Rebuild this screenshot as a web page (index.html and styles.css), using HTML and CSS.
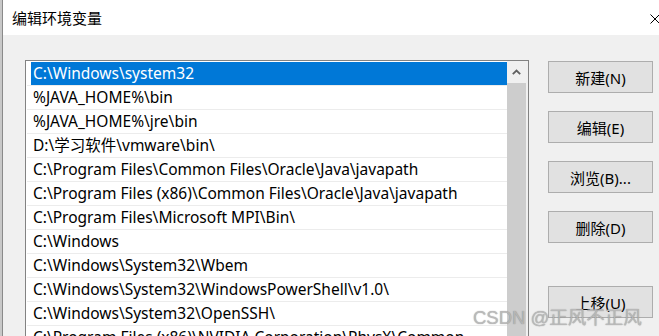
FILE: index.html
```html
<!DOCTYPE html>
<html>
<head>
    <meta charset="utf-8">
    <title>编辑环境变量</title>
    <link rel="stylesheet" href="styles.css">
</head>
<body>
    <div class="window">
        <!-- title bar -->
        <div class="titlebar">
            <span class="title">编辑环境变量</span>
            <svg class="close" width="10" height="10" viewBox="0 0 10 10">
                <path d="M0.5 0.5 L9.5 9.5 M9.5 0.5 L0.5 9.5" stroke="#000" stroke-width="1" fill="none"/>
            </svg>
        </div>

        <div class="content">
            <div class="listbox">
                <div class="items">
                    <div class="row selected"><span>C:\Windows\system32</span></div>
                    <div class="row"><span>%JAVA_HOME%\bin</span></div>
                    <div class="row"><span>%JAVA_HOME%\jre\bin</span></div>
                    <div class="row"><span>D:\学习软件\vmware\bin\</span></div>
                    <div class="row"><span>C:\Program Files\Common Files\Oracle\Java\javapath</span></div>
                    <div class="row"><span>C:\Program Files (x86)\Common Files\Oracle\Java\javapath</span></div>
                    <div class="row"><span>C:\Program Files\Microsoft MPI\Bin\</span></div>
                    <div class="row"><span>C:\Windows</span></div>
                    <div class="row"><span>C:\Windows\System32\Wbem</span></div>
                    <div class="row"><span>C:\Windows\System32\WindowsPowerShell\v1.0\</span></div>
                    <div class="row"><span>C:\Windows\System32\OpenSSH\</span></div>
                    <div class="row"><span>C:\Program Files (x86)\NVIDIA Corporation\PhysX\Common</span></div>
                </div>
                <div class="scrollbar">
                    <div class="arrow">
                        <svg width="9" height="6" viewBox="0 0 9 6">
                            <polyline points="0.8,5.2 4.5,1.5 8.2,5.2" stroke="#606060" stroke-width="1.8" fill="none"/>
                        </svg>
                    </div>
                    <div class="thumb"></div>
                </div>
            </div>

            <div class="buttons">
                <button>新建(N)</button>
                <button>编辑(E)</button>
                <button>浏览(B)...</button>
                <button>删除(D)</button>
                <button class="group-start">上移(U)</button>
            </div>
        </div>
    </div>

    <div class="watermark">CSDN @正风不正风</div>
</body>
</html>
```

FILE: styles.css
```css
html, body {
    margin: 0;
    height: 336px;
    overflow: hidden;
}

body {
    background: #c8c8c8;
    padding-left: 2px;
    font-family: "Noto Sans", "Noto Sans CJK SC", sans-serif;
    font-size: 15px;
    color: #000;
    position: relative;
}

.window {
    height: 100%;
    background: #f0f0f0;
    border-left: 1px solid #8a8a8a;
}

/* title bar */
.titlebar {
    height: 35px;
    background: #fff;
    display: flex;
    align-items: center;
    justify-content: space-between;
    padding-left: 9px;
}

.title {
    font-family: "Noto Sans CJK SC", sans-serif;
    font-size: 15px;
}

.close {
    margin-right: -1px;
    margin-top: 2px;
}

.content {
    display: flex;
    align-items: flex-start;
    padding: 25px 0 0 22px;
}

/* list */
.listbox {
    width: 504px;
    height: 400px;
    box-sizing: border-box;
    border: 1px solid #828282;
    background: #fff;
    display: flex;
}

.items {
    flex: 1;
    min-width: 0;
    padding-top: 1px;
    font-size: 15.5px;
}

.row {
    height: 23px;
    margin-left: 1px;
    border-bottom: 1px solid #ececec;
    white-space: nowrap;
    overflow: hidden;
}

.row span {
    display: block;
    height: 23px;
    line-height: 23px;
    margin-left: 4px;
    padding-left: 2px;
}

.row.selected span {
    background: #0078d7;
    color: #fff;
}

.scrollbar {
    width: 21px;
    background: #f0f0f0;
}

.scrollbar .arrow {
    height: 22px;
    display: flex;
    align-items: center;
    justify-content: center;
    padding-right: 2px;
}

.scrollbar .thumb {
    width: 19px;
    height: 400px;
    background: #cdcdcd;
}

/* buttons */
.buttons {
    display: flex;
    flex-direction: column;
    gap: 18px;
    margin-left: 19px;
    margin-top: 1px;
}

.buttons button {
    width: 105px;
    height: 32px;
    background: #e1e1e1;
    border: 1px solid #adadad;
    font-family: "Noto Sans", "Noto Sans CJK SC", sans-serif;
    font-size: 15px;
    color: #000;
    padding: 0;
}

.buttons .group-start {
    margin-top: 25px;
}

.watermark {
    position: absolute;
    left: 473px;
    top: 303px;
    font-family: "Liberation Sans", "Noto Sans CJK SC", sans-serif;
    font-size: 18.5px;
    color: rgba(190, 190, 190, 0.85);
    text-shadow: 0 0 1px rgba(80, 80, 80, 0.6);
    white-space: nowrap;
}
```
